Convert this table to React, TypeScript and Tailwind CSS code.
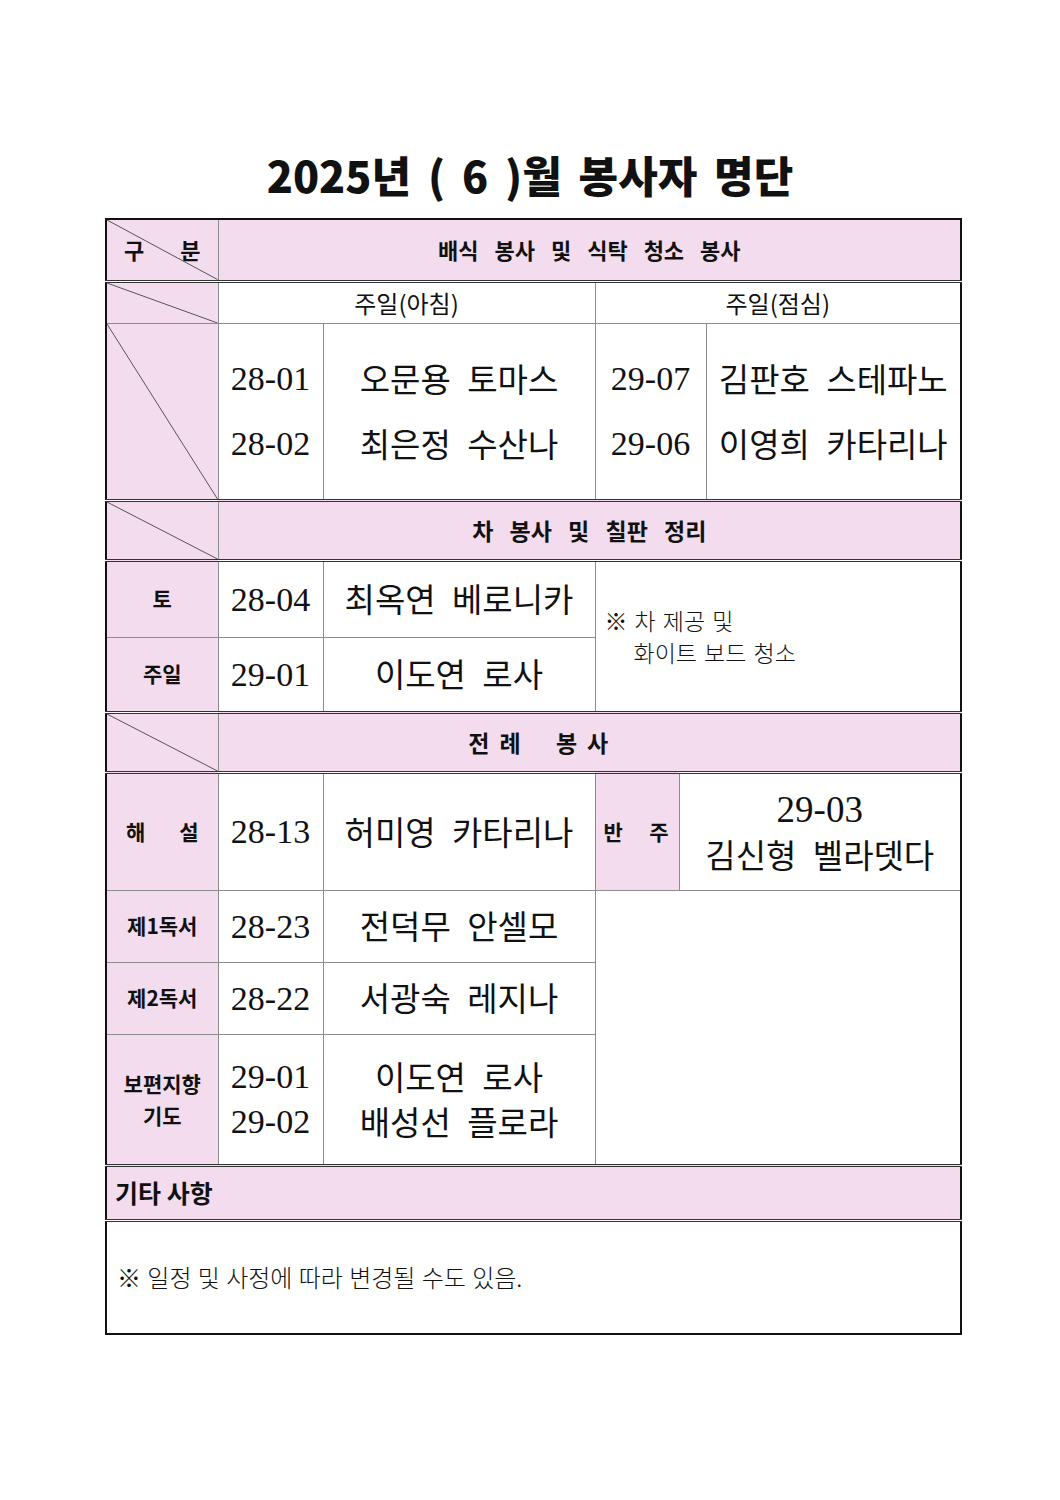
import React from "react";

const cell = "border border-[#8c8c8c] align-middle";
const pink = "bg-[#f3dced]";
const dbl = "border-b-[3px] border-double border-b-[#333]";
const num = "font-['Liberation_Serif','Noto_Sans_CJK_KR',serif] text-[34px] text-center";
const name = "text-[33px] text-center [word-spacing:9px]";
const label = "text-[21px] font-bold text-center";

function Slash() {
  return (
    <svg
      className="pointer-events-none absolute inset-0 h-full w-full"
      viewBox="0 0 100 100"
      preserveAspectRatio="none"
    >
      <line
        x1="0"
        y1="0"
        x2="100"
        y2="100"
        stroke="#555"
        strokeWidth="1"
        vectorEffect="non-scaling-stroke"
      />
    </svg>
  );
}

export default function App() {
  return (
    <div className="min-h-[1500px] bg-white pt-[148px] font-['Noto_Sans_CJK_KR',sans-serif] text-[#111]">
      {/* 제목 */}
      <h1 className="mb-[18px] text-center text-[43px] font-black leading-[52px] [word-spacing:7px]">
        2025년 ( 6 )월 봉사자 명단
      </h1>

      <table className="ml-[105px] w-[855px] table-fixed border-collapse border-2 border-[#111]">
        <colgroup>
          <col className="w-[112px]" />
          <col className="w-[105px]" />
          <col className="w-[272px]" />
          <col className="w-[84px]" />
          <col className="w-[27px]" />
          <col className="w-[255px]" />
        </colgroup>
        <tbody>
          {/* 배식 봉사 */}
          <tr className={`h-[62px] ${dbl}`}>
            <td className={`${cell} ${pink} relative`}>
              <Slash />
              <div className="flex justify-between px-[17px] text-[22px] font-bold">
                <span>구</span>
                <span>분</span>
              </div>
            </td>
            <td colSpan={5} className={`${cell} ${pink} text-center text-[22px] font-bold [word-spacing:11px]`}>
              배식 봉사 및 식탁 청소 봉사
            </td>
          </tr>
          <tr className="h-[42px]">
            <td className={`${cell} ${pink} relative`}>
              <Slash />
            </td>
            <td colSpan={2} className={`${cell} text-center text-[24px] leading-[30px]`}>
              주일(아침)
            </td>
            <td colSpan={3} className={`${cell} text-center text-[24px] leading-[30px]`}>
              주일(점심)
            </td>
          </tr>
          <tr className={`h-[177px] ${dbl}`}>
            <td className={`${cell} ${pink} relative`}>
              <Slash />
            </td>
            <td className={`${cell} ${num} leading-[65px]`}>
              <div>28-01</div>
              <div>28-02</div>
            </td>
            <td className={`${cell} ${name} leading-[65px]`}>
              <div>오문용 토마스</div>
              <div>최은정 수산나</div>
            </td>
            <td colSpan={2} className={`${cell} ${num} leading-[65px]`}>
              <div>29-07</div>
              <div>29-06</div>
            </td>
            <td className={`${cell} ${name} leading-[65px]`}>
              <div>김판호 스테파노</div>
              <div>이영희 카타리나</div>
            </td>
          </tr>

          {/* 차 봉사 */}
          <tr className={`h-[60px] ${dbl}`}>
            <td className={`${cell} ${pink} relative`}>
              <Slash />
            </td>
            <td colSpan={5} className={`${cell} ${pink} text-center text-[23px] font-bold [word-spacing:11px]`}>
              차 봉사 및 칠판 정리
            </td>
          </tr>
          <tr className="h-[77px]">
            <td className={`${cell} ${pink} ${label}`}>토</td>
            <td className={`${cell} ${num}`}>28-04</td>
            <td className={`${cell} ${name}`}>최옥연 베로니카</td>
            <td colSpan={3} rowSpan={2} className={`${cell} pl-[9px] text-[23px] font-light leading-[32px] [word-spacing:2px]`}>
              <div>※ 차 제공 및</div>
              <div className="pl-[29px]">화이트 보드 청소</div>
            </td>
          </tr>
          <tr className={`h-[75px] ${dbl}`}>
            <td className={`${cell} ${pink} ${label}`}>주일</td>
            <td className={`${cell} ${num}`}>29-01</td>
            <td className={`${cell} ${name}`}>이도연 로사</td>
          </tr>

          {/* 전례 봉사 */}
          <tr className={`h-[60px] ${dbl}`}>
            <td className={`${cell} ${pink} relative`}>
              <Slash />
            </td>
            <td colSpan={5} className={`${cell} ${pink} pr-[92px] text-center text-[23px] font-bold tracking-[10px] [word-spacing:10px]`}>
              전례 봉사
            </td>
          </tr>
          <tr className="h-[118px]">
            <td className={`${cell} ${pink}`}>
              <div className="flex justify-between pl-[19px] pr-[19px] text-[21px] font-bold">
                <span>해</span>
                <span>설</span>
              </div>
            </td>
            <td className={`${cell} ${num}`}>28-13</td>
            <td className={`${cell} ${name}`}>허미영 카타리나</td>
            <td className={`${cell} ${pink}`}>
              <div className="flex justify-between pl-[8px] pr-[10px] text-[21px] font-bold">
                <span>반</span>
                <span>주</span>
              </div>
            </td>
            <td colSpan={2} className={`${cell} text-center leading-[45px]`}>
              <div className="font-['Liberation_Serif',serif] text-[37px]">29-03</div>
              <div className="text-[33px] [word-spacing:9px]">김신형 벨라뎃다</div>
            </td>
          </tr>
          <tr className="h-[72px]">
            <td className={`${cell} ${pink} ${label}`}>제1독서</td>
            <td className={`${cell} ${num}`}>28-23</td>
            <td className={`${cell} ${name}`}>전덕무 안셀모</td>
            <td colSpan={3} rowSpan={3} className={cell}></td>
          </tr>
          <tr className="h-[72px]">
            <td className={`${cell} ${pink} ${label}`}>제2독서</td>
            <td className={`${cell} ${num}`}>28-22</td>
            <td className={`${cell} ${name}`}>서광숙 레지나</td>
          </tr>
          <tr className={`h-[131px] ${dbl}`}>
            <td className={`${cell} ${pink} ${label} leading-[32px]`}>
              <div>보편지향</div>
              <div>기도</div>
            </td>
            <td className={`${cell} ${num} leading-[45px]`}>
              <div>29-01</div>
              <div>29-02</div>
            </td>
            <td className={`${cell} ${name} leading-[45px]`}>
              <div>이도연 로사</div>
              <div>배성선 플로라</div>
            </td>
          </tr>

          {/* 기타 사항 */}
          <tr className={`h-[55px] ${dbl}`}>
            <td colSpan={6} className={`${cell} ${pink} pl-[8px] text-[25px] font-bold`}>
              기타 사항
            </td>
          </tr>
          <tr className="h-[114px]">
            <td colSpan={6} className={`${cell} pl-[10px] text-[24px] font-light [word-spacing:1px]`}>
              ※ 일정 및 사정에 따라 변경될 수도 있음.
            </td>
          </tr>
        </tbody>
      </table>
    </div>
  );
}
